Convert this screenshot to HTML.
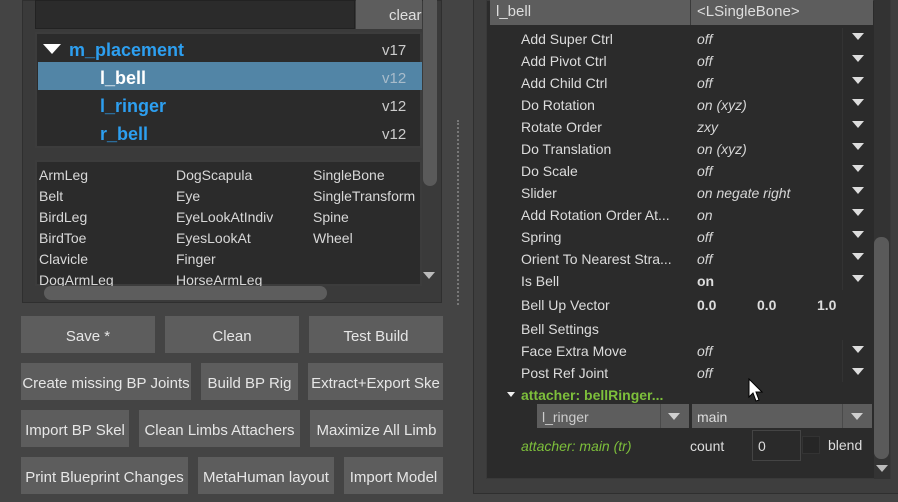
<!DOCTYPE html><html><head><style>
body{margin:0;width:898px;height:502px;background:#444;position:relative;overflow:hidden;font-family:"Liberation Sans",sans-serif;font-size:14px;color:#ddd}
div{position:absolute;box-sizing:border-box}
.t{white-space:nowrap}
.btn{background:#5d5d5d;color:#e6e6e6;height:37px;overflow:hidden;white-space:nowrap;font-size:15px;display:flex;justify-content:center;align-items:center;padding-top:4px}
.btn span{flex:none}
.lbl{left:521px;color:#dcdcdc}
.val{left:697px;font-style:italic;color:#d6d6d6}
.arr{left:852px;width:0;height:0;border-left:6px solid transparent;border-right:6px solid transparent;border-top:7px solid #ddd}
.tri{width:0;height:0;border-left:6px solid transparent;border-right:6px solid transparent;border-top:7px solid #cfcfcf}
</style></head><body>
<div style="left:22px;top:0;width:420px;height:303px;background:#3a3a3a;border:1px solid #2f2f2f"></div>
<div style="left:35px;top:0;width:320px;height:29px;background:#2b2b2b;border:1px solid #222"></div>
<div style="left:356px;top:0;width:66px;height:29px;background:#5d5d5d"></div>
<div class="t" style="left:389px;top:7px;font-size:15px;color:#e0e0e0">clear</div>
<div style="left:35px;top:32px;width:387px;height:116px;background:#2b2b2b;border:2px solid #3c3c3c"></div>
<div class="tri" style="left:43px;top:44px;border-left-width:9px;border-right-width:9px;border-top-width:10px;border-top-color:#fff"></div>
<div class="t" style="left:69px;top:40px;font-size:18px;font-weight:bold;color:#2d9ff0">m_placement</div>
<div class="t" style="left:382px;top:42px;font-size:15px;color:#ccc">v17</div>
<div style="left:38px;top:62px;width:384px;height:28px;background:#5285a6"></div>
<div class="t" style="left:100px;top:68px;font-size:18px;font-weight:bold;color:#fff">l_bell</div>
<div class="t" style="left:382px;top:70px;font-size:15px;color:#a8bccb">v12</div>
<div class="t" style="left:100px;top:96px;font-size:18px;font-weight:bold;color:#2d9ff0">l_ringer</div>
<div class="t" style="left:382px;top:98px;font-size:15px;color:#ccc">v12</div>
<div class="t" style="left:100px;top:124px;font-size:18px;font-weight:bold;color:#2d9ff0">r_bell</div>
<div class="t" style="left:382px;top:126px;font-size:15px;color:#ccc">v12</div>
<div style="left:423px;top:0;width:14px;height:186px;background:#5a5a5a;border-radius:0 0 7px 7px"></div>
<div style="left:35px;top:160px;width:387px;height:126px;background:#2b2b2b;border:2px solid #3c3c3c"></div>
<div class="t" style="left:39px;top:165px;line-height:21px;color:#d8d8d8">ArmLeg<br>Belt<br>BirdLeg<br>BirdToe<br>Clavicle<br>DogArmLeg</div>
<div class="t" style="left:176px;top:165px;line-height:21px;color:#d8d8d8">DogScapula<br>Eye<br>EyeLookAtIndiv<br>EyesLookAt<br>Finger<br>HorseArmLeg</div>
<div class="t" style="left:313px;top:165px;line-height:21px;color:#d8d8d8;width:108px;overflow:hidden">SingleBone<br>SingleTransform<br>Spine<br>Wheel</div>
<div style="left:35px;top:286px;width:387px;height:15px;background:#3a3a3a"></div>
<div style="left:44px;top:286px;width:283px;height:14px;background:#5d5d5d;border-radius:7px"></div>
<div class="tri" style="left:423px;top:272px;border-top-color:#bbb"></div>
<div class="btn" style="left:21px;top:316px;width:134px"><span>Save *</span></div>
<div class="btn" style="left:165px;top:316px;width:134px"><span>Clean</span></div>
<div class="btn" style="left:309px;top:316px;width:134px"><span>Test Build</span></div>
<div class="btn" style="left:21px;top:363px;width:170px"><span>Create missing BP Joints</span></div>
<div class="btn" style="left:201px;top:363px;width:97px"><span>Build BP Rig</span></div>
<div class="btn" style="left:308px;top:363px;width:135px"><span>Extract+Export Ske</span></div>
<div class="btn" style="left:21px;top:410px;width:108px"><span>Import BP Skel</span></div>
<div class="btn" style="left:139px;top:410px;width:161px"><span>Clean Limbs Attachers</span></div>
<div class="btn" style="left:310px;top:410px;width:133px"><span>Maximize All Limb</span></div>
<div class="btn" style="left:21px;top:457px;width:167px"><span>Print Blueprint Changes</span></div>
<div class="btn" style="left:198px;top:457px;width:136px"><span>MetaHuman layout</span></div>
<div class="btn" style="left:344px;top:457px;width:99px"><span>Import Model</span></div>
<div style="left:457px;top:120px;width:2px;height:185px;border-left:2px dotted #777"></div>
<div style="left:473px;top:-2px;width:430px;height:496px;border:1px solid #2f2f2f;background:#3e3e3e"></div>
<div style="left:486px;top:0;width:405px;height:479px;background:#2b2b2b;border:1px solid #393939"></div>
<div style="left:490px;top:0;width:383px;height:25px;background:#5d5d5d"></div>
<div style="left:690px;top:0;width:1px;height:25px;background:#3a3a3a"></div>
<div class="t" style="left:496px;top:3px;font-size:15px">l_bell</div>
<div class="t" style="left:697px;top:3px;font-size:15px">&lt;LSingleBone&gt;</div>
<div style="left:842px;top:28px;width:1px;height:262px;background:#333"></div>
<div style="left:874px;top:0;width:16px;height:479px;background:#333"></div>
<div style="left:874px;top:237px;width:15px;height:222px;background:#5a5a5a;border-radius:7px"></div>
<div class="tri" style="left:876px;top:465px;border-top-color:#bbb"></div>
<div class="t lbl" style="top:31px">Add Super Ctrl</div><div class="t val" style="top:31px">off</div><div class="arr" style="top:33px"></div>
<div class="t lbl" style="top:53px">Add Pivot Ctrl</div><div class="t val" style="top:53px">off</div><div class="arr" style="top:55px"></div>
<div class="t lbl" style="top:75px">Add Child Ctrl</div><div class="t val" style="top:75px">off</div><div class="arr" style="top:77px"></div>
<div class="t lbl" style="top:97px">Do Rotation</div><div class="t val" style="top:97px">on (xyz)</div><div class="arr" style="top:99px"></div>
<div class="t lbl" style="top:119px">Rotate Order</div><div class="t val" style="top:119px">zxy</div><div class="arr" style="top:121px"></div>
<div class="t lbl" style="top:141px">Do Translation</div><div class="t val" style="top:141px">on (xyz)</div><div class="arr" style="top:143px"></div>
<div class="t lbl" style="top:163px">Do Scale</div><div class="t val" style="top:163px">off</div><div class="arr" style="top:165px"></div>
<div class="t lbl" style="top:185px">Slider</div><div class="t val" style="top:185px">on negate right</div><div class="arr" style="top:187px"></div>
<div class="t lbl" style="top:207px">Add Rotation Order At...</div><div class="t val" style="top:207px">on</div><div class="arr" style="top:209px"></div>
<div class="t lbl" style="top:229px">Spring</div><div class="t val" style="top:229px">off</div><div class="arr" style="top:231px"></div>
<div class="t lbl" style="top:251px">Orient To Nearest Stra...</div><div class="t val" style="top:251px">off</div><div class="arr" style="top:253px"></div>
<div class="t lbl" style="top:273px">Is Bell</div><div class="t" style="left:697px;top:273px;font-weight:bold">on</div><div class="arr" style="top:275px"></div>
<div class="t lbl" style="top:297px">Bell Up Vector</div>
<div class="t" style="left:697px;top:297px;font-weight:bold">0.0</div>
<div class="t" style="left:757px;top:297px;font-weight:bold">0.0</div>
<div class="t" style="left:817px;top:297px;font-weight:bold">1.0</div>
<div class="t lbl" style="top:321px">Bell Settings</div>
<div style="left:842px;top:340px;width:1px;height:42px;background:#333"></div>
<div class="t lbl" style="top:343px">Face Extra Move</div><div class="t val" style="top:343px">off</div><div class="arr" style="top:346px"></div>
<div class="t lbl" style="top:365px">Post Ref Joint</div><div class="t val" style="top:365px">off</div><div class="arr" style="top:368px"></div>
<div class="tri" style="left:507px;top:392px;border-left-width:4px;border-right-width:4px;border-top-width:5px;border-top-color:#eee"></div>
<div class="t" style="left:521px;top:387px;font-weight:bold;color:#7dbf3b">attacher: bellRinger...</div>
<div style="left:537px;top:404px;width:152px;height:24px;background:#5d5d5d"></div>
<div style="left:660px;top:404px;width:1px;height:24px;background:#4a4a4a"></div>
<div class="t" style="left:542px;top:409px;color:#ccc">l_ringer</div>
<div class="tri" style="left:668px;top:413px"></div>
<div style="left:692px;top:404px;width:180px;height:24px;background:#5d5d5d"></div>
<div style="left:842px;top:404px;width:1px;height:24px;background:#4a4a4a"></div>
<div class="t" style="left:697px;top:409px;color:#ddd">main</div>
<div class="tri" style="left:851px;top:413px"></div>
<div class="t" style="left:521px;top:438px;font-style:italic;color:#7dbf3b">attacher: main (tr)</div>
<div class="t" style="left:690px;top:438px">count</div>
<div style="left:752px;top:430px;width:49px;height:31px;background:#2a2a2a;border:1px solid #444"></div>
<div class="t" style="left:758px;top:438px">0</div>
<div style="left:802px;top:436px;width:18px;height:18px;background:#262626;border:1px solid #333"></div>
<div class="t" style="left:828px;top:437px">blend</div>
<svg style="position:absolute;left:748px;top:378px" width="16" height="26" viewBox="0 0 16 26"><path d="M1 1 L1 19 L5 15 L8 23 L11 22 L8 14 L14 14 Z" fill="#fff" stroke="#000" stroke-width="1"/></svg>
</body></html>
